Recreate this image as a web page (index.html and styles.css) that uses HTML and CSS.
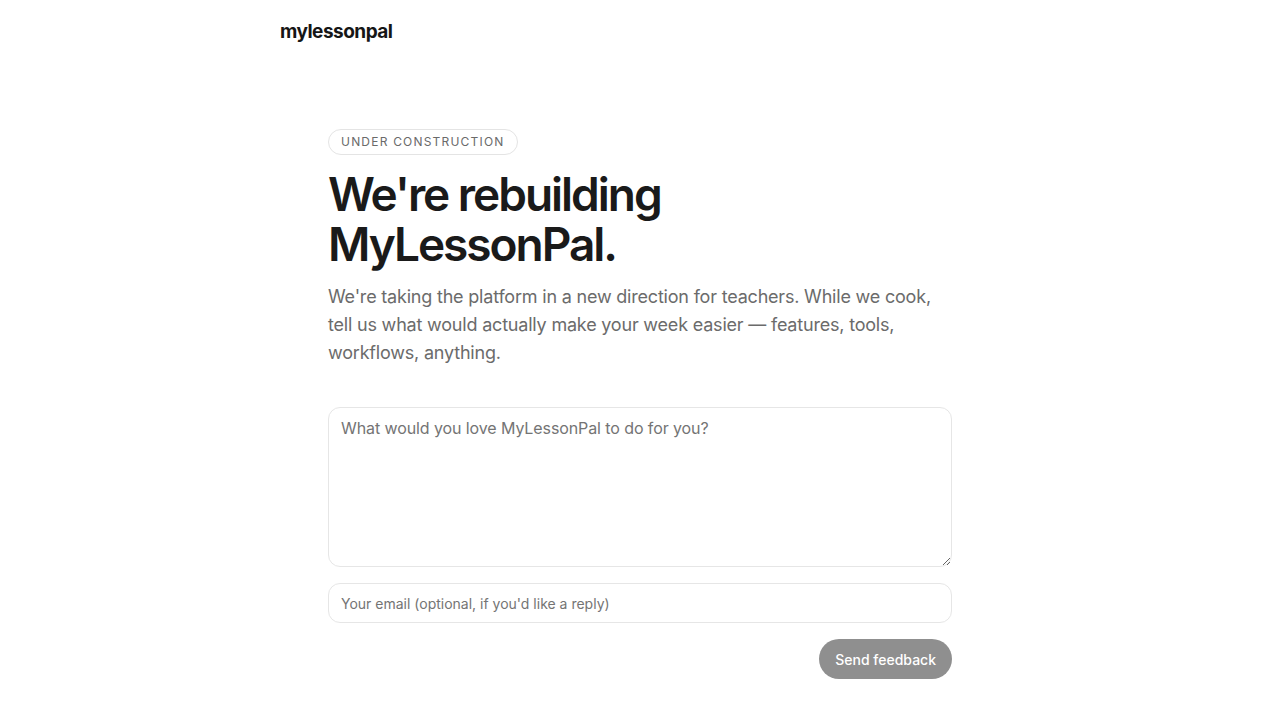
FILE: index.html
```html
<!DOCTYPE html>
<html lang="en">
<head>
<meta charset="utf-8">
<title>MyLessonPal</title>
<link rel="stylesheet" href="styles.css">
</head>
<body>
<header class="site-header">
  <div class="logo">mylessonpal</div>
</header>
<main class="main">
  <span class="badge">Under construction</span>
  <h1 class="title">We're rebuilding<br>MyLessonPal.</h1>
  <p class="lead">We're taking the platform in a new direction for teachers. While we cook, tell us what would actually make your week easier — features, tools, workflows, anything.</p>
  <form class="form">
    <textarea class="field textarea" placeholder="What would you love MyLessonPal to do for you?"></textarea>
    <input class="field input" type="email" placeholder="Your email (optional, if you'd like a reply)">
    <div class="actions">
      <button class="btn" type="button" disabled>Send feedback</button>
    </div>
  </form>
</main>
</body>
</html>
```
FILE: styles.css
```css
* { box-sizing: border-box; }
html, body { margin: 0; padding: 0; background: #ffffff; }
body {
  font-family: Inter, "Noto Sans", "Liberation Sans", sans-serif;
  color: #1a1a1a;
}
.site-header {
  max-width: 720px;
  margin: 0 auto;
  padding: 20px 0 0;
  height: 90px;
}
.logo {
  font-size: 19px;
  font-weight: 700;
  letter-spacing: -0.027em;
  line-height: 24px;
  color: #161616;
}
.main {
  max-width: 624px;
  margin: 0 auto;
  padding-top: 39px;
}
.badge {
  display: inline-block;
  border: 1px solid #e4e4e4;
  border-radius: 999px;
  padding: 0 12px;
  height: 26px;
  line-height: 24px;
  font-size: 12px;
  letter-spacing: 0.1em;
  text-transform: uppercase;
  color: #6a6a6a;
}
.title {
  margin: 14px 0 0;
  font-size: 46px;
  line-height: 50px;
  font-weight: 600;
  letter-spacing: -0.044em;
  color: #1a1a1a;
}
.lead {
  margin: 14px 0 0;
  font-size: 18px;
  line-height: 28px;
  letter-spacing: -0.011em;
  color: #6b6b6b;
}
.form {
  margin-top: 40px;
  display: flex;
  flex-direction: column;
  gap: 16px;
}
.field {
  width: 100%;
  font-family: inherit;
  border: 1px solid #e6e6e6;
  border-radius: 12px;
  background: #fff;
  color: #1a1a1a;
  outline: none;
}
.field::placeholder { color: #747474; opacity: 1; }
.textarea {
  height: 160px;
  padding: 10px 12px;
  font-size: 16px;
  line-height: 20px;
  letter-spacing: -0.006em;
  resize: vertical;
}
.input {
  height: 40px;
  padding: 0 12px;
  font-size: 14px;
}
.actions {
  display: flex;
  justify-content: flex-end;
}
.btn {
  height: 40px;
  padding: 0 16px;
  border: none;
  border-radius: 999px;
  background: #8f8f8f;
  color: #fff;
  font-family: inherit;
  font-size: 14px;
  font-weight: 500;
}
```
